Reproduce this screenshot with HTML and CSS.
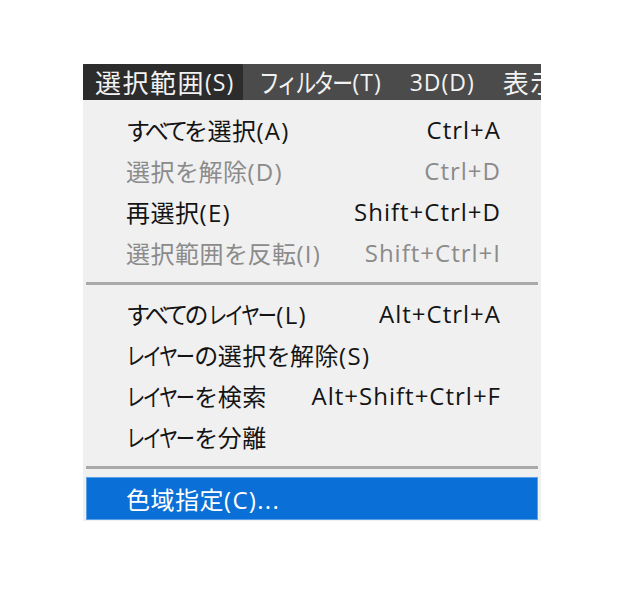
FILE: index.html
```html
<!DOCTYPE html>
<html lang="ja">
<head>
<meta charset="utf-8">
<link rel="stylesheet" href="styles.css">
</head>
<body>
<div class="wrap">
  <div class="menubar">
    <div class="mb-item active"><span class="kj">選択範囲</span><span class="lt">(S)</span></div>
    <div class="mb-item"><span class="kt">フィルター</span><span class="lt">(T)</span></div>
    <div class="mb-item"><span class="lt">3D(D)</span></div>
    <div class="mb-item"><span class="kj">表示</span><span class="lt">(V)</span></div>
  </div>
  <div class="panel">
    <div class="row"><span class="label"><span class="h">すべてを</span>選択<span class="lt">(A)</span></span><span class="key">Ctrl+A</span></div>
    <div class="row disabled"><span class="label">選択<span class="h">を</span>解除<span class="lt">(D)</span></span><span class="key">Ctrl+D</span></div>
    <div class="row"><span class="label">再選択<span class="lt">(E)</span></span><span class="key">Shift+Ctrl+D</span></div>
    <div class="row disabled"><span class="label">選択範囲<span class="h">を</span>反転<span class="lt">(I)</span></span><span class="key">Shift+Ctrl+I</span></div>
    <div class="sep"></div>
    <div class="row"><span class="label"><span class="h">すべての</span><span class="kt">レイヤー</span><span class="lt">(L)</span></span><span class="key">Alt+Ctrl+A</span></div>
    <div class="row"><span class="label"><span class="kt">レイヤー</span><span class="h">の</span>選択<span class="h">を</span>解除<span class="lt">(S)</span></span><span class="key"></span></div>
    <div class="row"><span class="label"><span class="kt">レイヤー</span><span class="h">を</span>検索</span><span class="key">Alt+Shift+Ctrl+F</span></div>
    <div class="row"><span class="label"><span class="kt">レイヤー</span><span class="h">を</span>分離</span><span class="key"></span></div>
    <div class="sep"></div>
    <div class="row hl"><span class="label">色域指定<span class="lt">(C)...</span></span><span class="key"></span></div>
  </div>
</div>
</body>
</html>
```
FILE: styles.css
```css
html, body {
  margin: 0;
  padding: 0;
  background: #ffffff;
}
body {
  font-family: "Open Sans", "Noto Sans CJK JP", sans-serif;
  font-size: 24px;
}
.wrap {
  margin-top: 64px;
  margin-left: 83px;
  width: 458px;
}
.menubar {
  display: flex;
  height: 36px;
  background: #4b4b4b;
  overflow: hidden;
  white-space: nowrap;
  font-size: 26px;
}
.mb-item {
  display: flex;
  align-items: center;
  padding: 0 12px 0 16px;
  color: #f2f2f2;
  flex: none;
}
.mb-item.active {
  background: #2c2c2c;
  width: 160px;
  box-sizing: border-box;
  padding: 0 11px 0 12px;
  border-radius: 2px 2px 0 0;
}
.menubar .kj {
  letter-spacing: 1.5px;
}
.menubar .kt {
  display: inline-block;
  letter-spacing: -3px;
  transform: scaleX(0.8);
  transform-origin: 0 50%;
  margin-right: -21px;
}
.menubar .lt {
  font-size: 23px;
  letter-spacing: 1px;
}
.panel {
  background: #f0f0f0;
  padding: 9px 3px 1px 3px;
}
.row {
  display: flex;
  justify-content: space-between;
  align-items: center;
  height: 41px;
  padding: 0 37px 0 40px;
  color: #141414;
  letter-spacing: 0.5px;
  white-space: nowrap;
}
.row .h {
  letter-spacing: -3.6px;
  margin-right: 3px;
}
.row .kt {
  display: inline-block;
  letter-spacing: -3px;
  transform: scaleX(0.8);
  transform-origin: 0 50%;
  margin-right: -15px;
}
.row .lt {
  letter-spacing: 1.3px;
}
.row.disabled {
  color: #8b8b8b;
}
.key {
  letter-spacing: 1px;
}
.sep {
  height: 3px;
  background: #a9a9a9;
  margin: 9px 0 8px 0;
}
.row.hl {
  background: #0a6fd6;
  color: #ffffff;
  height: 43px;
  box-shadow: inset 0 0 0 1px #5aa0e8;
}
```
